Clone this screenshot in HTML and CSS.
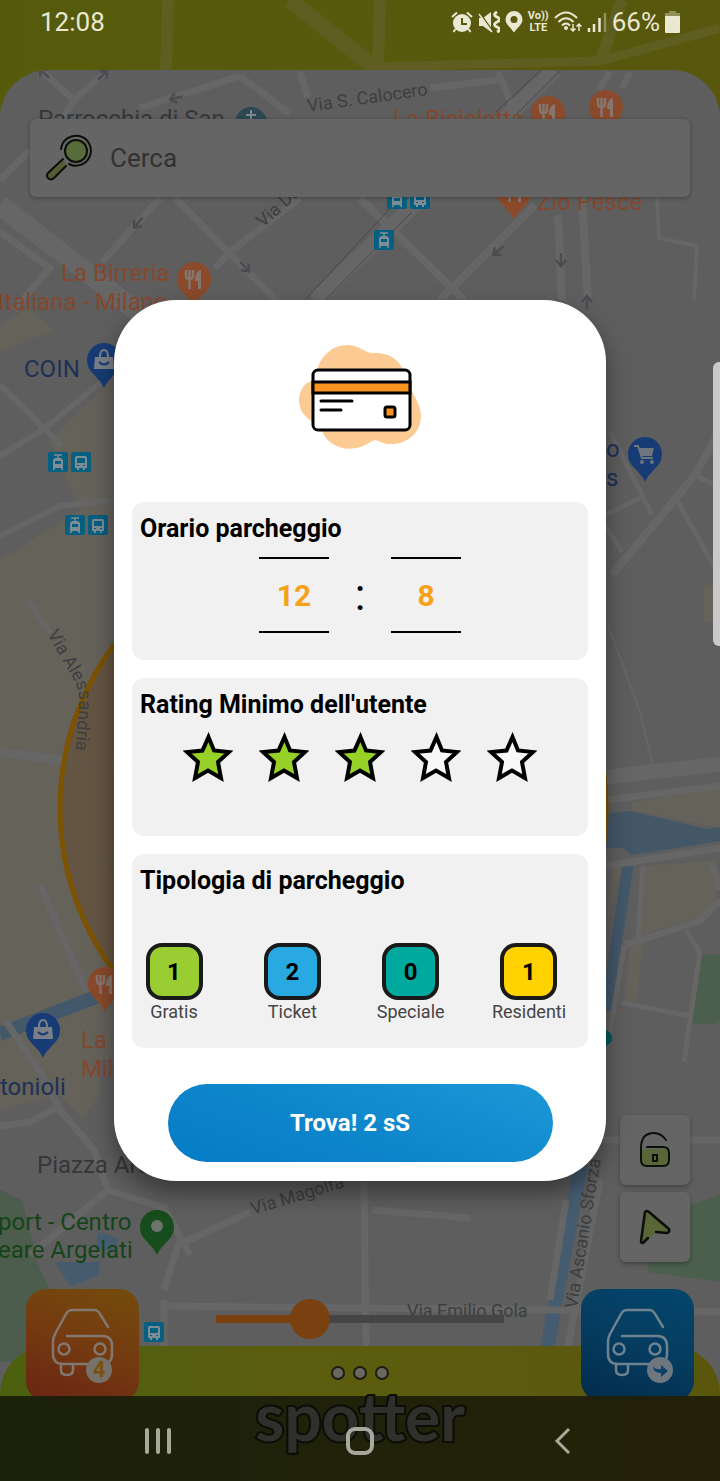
FILE: index.html
```html
<!DOCTYPE html>
<html lang="it">
  <head>
    <meta charset="UTF-8" />
    <meta name="viewport" content="width=device-width, initial-scale=1.0" />
    <title>Spotter</title>
    <link rel="stylesheet" href="styles.css">
  </head>
  <body>
    <div class="app">
      <!-- map -->
      <svg class="map" viewBox="0 0 720 1481" preserveAspectRatio="xMidYMin slice" aria-hidden="true">
        <defs>
          <linearGradient id="top" x1="0" y1="0" x2="1" y2="0">
            <stop offset="0" stop-color="#565b0c" />
            <stop offset="1" stop-color="#58570d" />
          </linearGradient>
          <clipPath id="sheet"><path d="M0 1481V118a48 48 0 0 1 48-48h624a48 48 0 0 1 48 48v1363z" /></clipPath>
          <path id="pin" d="M0 -17a17 17 0 0 1 17 17c0 9-5 12-10 18-4 4-5 6-7 10-2-4-3-6-7-10-5-6-10-9-10-18a17 17 0 0 1 17-17z" />
          <g id="food">
            <path d="M-8 -9v6q0 3 3.500 3t3.500-3v-6M-4.500 -9v19" fill="none" stroke="#85766e" stroke-width="2.500" />
            <path d="M7 10H4V2H1q0-10 6-11z" fill="#85766e" />
          </g>
          <g id="bag">
            <path d="M-9 -3H9L10 9H-10z" fill="#7b7f88" />
            <path d="M-4 -3q0-7 4-7t4 7" fill="none" stroke="#7b7f88" stroke-width="2" />
            <path d="M-5 2q5 5 10 0" fill="none" stroke="#173c75" stroke-width="2" />
          </g>
          <g id="tram">
            <rect width="20" height="20" rx="2" fill="#045f80" />
            <path d="M6 3h8M10 3v3M7 16l-2 2M13 16l2 2" stroke="#7f8d94" stroke-width="1.500" fill="none" />
            <path d="M7 6h6l2 2v8H5V8z" fill="#7f8d94" />
            <path d="M7 9h6v3H7z" fill="#045f80" />
          </g>
          <g id="bus">
            <rect width="20" height="20" rx="2" fill="#045f80" />
            <path d="M5 4h10l1 2v10h-2v2h-2v-2H8v2H6v-2H4V6z" fill="#7f8d94" />
            <path d="M6 6h8v5H6zM6 13h2v1H6zM12 13h2v1h-2z" fill="#045f80" />
          </g>
          <path id="arrow" d="M-7 0H5M0 -5L6 0L0 5" fill="none" stroke="#4b4c52" stroke-width="2.500" />
        </defs>

        <rect width="720" height="1481" fill="url(#top)" />
        <g fill="none" stroke="#5f5e20">
          <path d="M168 0L166 72M380 0L378 66M622 0L600 62" stroke-width="12" />
          <path d="M290 0L380 72" stroke-width="16" />
          <path d="M355 50L370 67L600 61L720 28" stroke-width="9" />
        </g>

        <g clip-path="url(#sheet)">
          <rect y="70" width="720" height="1411" fill="#5e5e5e" />
          <!-- built-up areas, parks, water -->
          <g fill="#65625a">
            <path d="M0 325L28 308L55 330L0 352z" />
            <path d="M50 440L114 378V1060H0V560L80 510z" />
            <path d="M0 1040L100 1000V1095L82 1118L60 1095L0 1110z" />
            <path d="M632 802L720 788V828L632 810z" />
            <path d="M644 866L715 860L716 912L640 935z" />
            <path d="M612 868H622L606 930zM630 945L644 940L636 1002H624z" />
            <path d="M704 585H714V622H704z" />
          </g>
          <path d="M700 955H720V1020L716 1024H692zM690 1205L720 1195V1282L648 1272V1240z" fill="#4b5f4c" />
          <path d="M0 1190L22 1200L40 1270L60 1310L20 1362L0 1362z" fill="#4c5c4d" />
          <path d="M114 850L105 855L114 882z" fill="#56603f" />
          <path d="M98 1232L118 1238L116 1250H96zM55 1262L100 1262L98 1276L70 1286z" fill="#475b6e" />
          <path d="M0 1034L114 990" stroke="#43586a" stroke-width="14" />
          <path d="M606 814L630 811L706 829L720 827V841L632 855L622 848H606z" fill="#435767" />
          <path d="M628 866L606 1010" stroke="#43586a" stroke-width="11" />
          <path d="M581 1165L555 1305L547 1350" fill="none" stroke="#455c70" stroke-width="14" />
          <!-- roads -->
          <g fill="none" stroke="#666" stroke-linejoin="round">
            <path d="M0 205L180 345" stroke-width="20" />
            <path d="M40 70L74 100L108 70M60 124L74 100M0 180L30 150M240 76L290 114M300 72L308 98M430 88L498 80M498 72L512 105M598 90L610 72M622 88L630 72" stroke-width="7" />
            <path d="M240 76L140 108M160 198L102 262M175 198L278 302M300 198L230 252L215 268" stroke-width="7" />
            <path d="M360 198L464 300M535 205L440 300M558 215L562 300M582 198L588 302" stroke-width="8" />
            <path d="M657 198L659 238L697 246L694 300" stroke-width="4" />
            <path d="M555 70L315 300" stroke-width="16" />
            <path d="M0 232L50 268L14 310" stroke-width="7" />
            <path d="M0 385L62 446M0 456L42 430L114 372M0 536L60 506L114 500M28 600L50 634" stroke-width="6" />
            <path d="M0 752L60 760L114 764" stroke-width="9" />
            <path d="M40 885L86 992M5 1020L42 1075L60 1110L94 1150L108 1190" stroke-width="7" />
            <path d="M612 575L695 475L720 430" stroke-width="8" />
            <path d="M610 432L652 515M677 500L714 566M605 515L640 498M605 525L622 552M695 475L720 488" stroke-width="5" />
            <path d="M608 625L640 712L653 766" stroke-width="2" />
            <path d="M606 777L720 764" stroke-width="15" />
            <path d="M606 800L720 786M606 866L720 848M625 945L700 921L720 900M712 862L720 890" stroke-width="7" />
            <path d="M643 866L638 940M624 946L608 1045M622 1003L690 1016M686 930L700 952L684 1062" stroke-width="5" />
            <path d="M0 1126L30 1122L56 1108M30 1255L108 1190L164 1208L190 1255M164 1290L178 1245L250 1212M164 1300V1346" stroke-width="7" />
            <path d="M164 1306L560 1310L720 1312M364 1180L366 1346M372 1210L470 1218M566 1200L550 1300" stroke-width="7" />
            <path d="M604 1140H720M600 1180L568 1346" stroke-width="7" />
          </g>
          <path d="M541 70L496 112M561 70L513 118M398 200L305 300M412 212L325 300" stroke="#484848" />
          <use href="#arrow" transform="translate(44 73) rotate(225)" />
          <use href="#arrow" transform="translate(103 75) rotate(-45)" />
          <use href="#arrow" transform="translate(176 98) rotate(165)" />
          <use href="#arrow" transform="translate(138 223) rotate(130)" />
          <use href="#arrow" transform="translate(245 267) rotate(48)" />
          <use href="#arrow" transform="translate(498 251) rotate(140)" />
          <use href="#arrow" transform="translate(561 260) rotate(90)" />
          <use href="#arrow" transform="translate(587 302) rotate(-90)" />

          <!-- search area -->
          <circle cx="333" cy="808" r="273" fill="#64533d" fill-opacity=".8" stroke="#7d5200" stroke-width="5" />

          <g class="place food">
            <text x="393" y="127">La Bicicletta</text>
            <text x="537" y="210">Zio Pesce</text>
            <text x="61" y="281">La Birreria</text>
            <text x="-2" y="310">Italiana - Milano</text>
            <text x="81" y="1048">La</text>
            <text x="81" y="1077">Mil</text>
          </g>
          <g class="place shop">
            <text x="24" y="377">COIN</text>
            <text x="606" y="457">o</text>
            <text x="606" y="486">s</text>
            <text x="0" y="1095">tonioli</text>
          </g>
          <g class="place park">
            <text x="-2" y="1230">port - Centro</text>
            <text x="-2" y="1258">eare Argelati</text>
          </g>
          <text class="place" x="38" y="127">Parrocchia di San</text>
          <text class="place" x="37" y="1173">Piazza Arcole</text>
          <g class="street">
            <text transform="translate(308 112) rotate(-8)">Via S. Calocero</text>
            <text transform="translate(263 228) rotate(-42)">Via Dante</text>
            <text transform="translate(253 1215) rotate(-17)">Via Magolfa</text>
            <text transform="translate(577 1309) rotate(-81)">Via Ascanio Sforza</text>
            <text x="407" y="1317">Via Emilio Gola</text>
            <path id="aless" d="M47 634L74 680Q80 692 79 704L75 760" fill="none" />
            <text><textPath href="#aless">Via Alessandria</textPath></text>
          </g>

          <circle cx="251" cy="123" r="16" fill="#2d4852" />
          <path d="M251 110v12M246 115h10" stroke="#7b8a90" stroke-width="2" />
          <g transform="translate(548 113)"><use href="#pin" fill="#8a4a2b" /><use href="#food" /></g>
          <g transform="translate(606 107)"><use href="#pin" fill="#8a4a2b" /><use href="#food" /></g>
          <g transform="translate(514 192)"><use href="#pin" fill="#8a4a2b" /><use href="#food" /></g>
          <g transform="translate(194 279)"><use href="#pin" fill="#8a4a2b" /><use href="#food" /></g>
          <g transform="translate(105 984)"><use href="#pin" fill="#8a4a2b" /><use href="#food" /></g>
          <g transform="translate(104 360)"><use href="#pin" fill="#173c75" /><use href="#bag" /></g>
          <g transform="translate(43 1030)"><use href="#pin" fill="#173c75" /><use href="#bag" /></g>
          <g transform="translate(645 454)">
            <use href="#pin" fill="#173c75" />
            <path d="M-11 -8h4l4 12h11" fill="none" stroke="#6f747d" stroke-width="2" />
            <path d="M-6 -6H9L7 2H-4z" fill="#6f747d" />
            <circle cx="-3" cy="8" r="2" fill="#6f747d" /><circle cx="7" cy="8" r="2" fill="#6f747d" />
          </g>
          <g transform="translate(157 1227)"><use href="#pin" fill="#174d1c" /><circle r="6" cy="-1" fill="#6c746c" /></g>
          <circle cx="604" cy="1038" r="8" fill="#005a5c" />
          <use href="#tram" x="387" y="189" /><use href="#bus" x="410" y="189" />
          <use href="#tram" x="374" y="230" />
          <use href="#tram" x="48" y="452" /><use href="#bus" x="71" y="452" />
          <use href="#tram" x="65" y="515" /><use href="#bus" x="88" y="515" />
          <use href="#bus" x="144" y="1322" />
        </g>
      </svg>

      <header class="status">
        <span class="clock">12:08</span>
        <svg width="22" height="22" viewBox="0 0 22 22">
          <circle cx="11" cy="12" r="9" fill="currentColor" />
          <path d="M4.500 18L2.500 21M17.500 18L19.500 21M1 6L6 1.500M21 6L16 1.500" stroke="currentColor" stroke-width="2" />
          <path d="M11 7v6h5" fill="none" stroke="#57580d" stroke-width="2" />
        </svg>
        <svg width="22" height="22" viewBox="0 0 22 22">
          <path d="M1 7h4L13 1v20L5 15H1z" fill="currentColor" />
          <path d="M1 1L15 21" stroke="#57580d" stroke-width="2" />
          <path d="M1 3L14 21" stroke="currentColor" stroke-width="1.500" />
          <path d="M19 1q-5 2.500 0 5t0 5 0 5 0 5" fill="none" stroke="currentColor" stroke-width="3" />
        </svg>
        <svg width="18" height="22" viewBox="0 0 18 22">
          <path d="M9 0a8.500 8.500 0 0 1 8.500 8.500C17.500 13 13 16 9 21.500 5 16 .5 13 .5 8.500A8.500 8.500 0 0 1 9 0zM9 5a3.500 3.500 0 1 0 0 7 3.500 3.500 0 0 0 0-7z" fill="currentColor" />
        </svg>
        <div class="volte"><div>Vo))</div><div>LTE</div></div>
        <svg width="28" height="22" viewBox="0 0 28 22" fill="none" stroke="currentColor" stroke-width="2">
          <path d="M1 7Q12 -4 23 7M4.500 11Q12 3.500 19.500 11M8 14.500Q12 10.500 16 14.500" />
          <circle cx="12" cy="17" r="1" />
          <path d="M19 13v7M16.500 17.500L19 20l2.500-2.500M25 20v-7M22.500 15.500L25 13l2.500 2.500" stroke-width="1.500" />
        </svg>
        <svg width="20" height="22" viewBox="0 0 20 22" stroke="currentColor" stroke-width="2.500">
          <path d="M2 21v-4M7 21v-8M12.500 21V7" />
          <path d="M18 21V2" opacity=".4" />
        </svg>
        <span class="percent">66%</span>
        <svg width="15" height="22" viewBox="0 0 15 22" fill="currentColor">
          <path d="M4 0h7v2h4v4H0V2h4z" opacity=".4" />
          <rect y="5" width="15" height="17" rx="1" />
        </svg>
      </header>

      <label class="search">
        <svg width="48" height="48" viewBox="0 0 48 48" fill="none" stroke="#0c0f08" stroke-width="2" stroke-linecap="round">
          <circle cx="30" cy="17" r="11" fill="#586b3a" />
          <path d="M15 15A15 15 0 1 1 23 30" />
          <path d="M17 25L2 39q-2 3 0 5 3 3 6 0L20 32" fill="#555c33" />
        </svg>
        <input type="text" placeholder="Cerca" aria-label="Cerca">
      </label>

      <div class="side">
        <button class="tool" aria-label="Blocca">
          <svg width="32" height="38" viewBox="0 0 32 38" fill="none" stroke="#0c0f08" stroke-width="2" stroke-linecap="round">
            <path d="M2 18H30V29q0 6-6 6H8q-6 0-6-6z" fill="#586638" stroke="none" />
            <path d="M27 9Q22 2 15 2 2 2 2 17v12q0 6 6 6h16q6 0 6-6v-7q0-6-6-6H8M14 24h4v6h-4z" />
          </svg>
        </button>
        <button class="tool" aria-label="Posizione">
          <svg width="32" height="36" viewBox="0 0 32 36" stroke="#0c0f08" stroke-width="2.500" stroke-linecap="round" stroke-linejoin="round">
            <path d="M3 33L7 3q1-2 3-1L30 20q1 4-3 4H17L6 33z" fill="#586638" stroke="none" />
            <path d="M9 29L4 34Q2 34 2 32L6 3q1-2 4 0L30 20q1 3-2 4L17 23" fill="none" />
          </svg>
        </button>
      </div>

      <div class="bottom">
        <div class="footer"></div>
        <div class="dock">
          <button class="car orange" aria-label="Parcheggi liberi">
            <svg width="62" height="76" viewBox="0 0 62 76" fill="none" stroke="#82786f" stroke-width="2.500" stroke-linecap="round">
              <path d="M56 20L48 7q-2-4-6-4H20q-4 0-6 4L3 27q-2 4-2 8v12q0 10 10 10h39q10 0 10-10v-8q0-10-10-10H15" />
              <circle cx="12" cy="42" r="5.500" /><circle cx="48" cy="42" r="5.500" />
              <path d="M9 58v5q0 5 6 5t6-5v-5" />
              <circle cx="47" cy="63" r="13" fill="#77716b" stroke="none" />
              <text class="count" x="47" y="70">4</text>
            </svg>
          </button>
          <div class="middle">
            <input class="range" type="range" min="0" max="100" value="30" aria-label="Raggio">
            <div class="dots"><i></i><i></i><i></i></div>
          </div>
          <button class="car blue" aria-label="Lascia il posto">
            <svg width="62" height="76" viewBox="0 0 62 76" fill="none" stroke="#6f8290" stroke-width="2.500" stroke-linecap="round">
              <path d="M56 20L48 7q-2-4-6-4H20q-4 0-6 4L3 27q-2 4-2 8v12q0 10 10 10h39q10 0 10-10v-8q0-10-10-10H15" />
              <circle cx="12" cy="42" r="5.500" /><circle cx="48" cy="42" r="5.500" />
              <path d="M9 58v5q0 5 6 5t6-5v-5" />
              <circle cx="53" cy="63" r="13" fill="#6c7780" stroke="none" />
              <path d="M46 59q2 4 8 3v-4l7 6-7 6v-4q-8 0-8-7z" fill="#0a4168" stroke="none" />
            </svg>
          </button>
        </div>
        <nav class="navbar">
          <span class="brand">spotter</span>
          <button aria-label="Recenti">
            <svg width="28" height="28" viewBox="0 0 28 28" stroke="currentColor" stroke-width="4" stroke-linecap="round"><path d="M3 3v22M14 3v22M25 3v22" /></svg>
          </button>
          <button aria-label="Home">
            <svg width="30" height="30" viewBox="0 0 30 30"><rect x="3" y="3" width="24" height="24" rx="7" fill="none" stroke="currentColor" stroke-width="4" /></svg>
          </button>
          <button aria-label="Indietro">
            <svg width="18" height="28" viewBox="0 0 18 28"><path d="M16 2L4 14l12 12" fill="none" stroke="currentColor" stroke-width="3" /></svg>
          </button>
        </nav>
      </div>

      <div class="edge"></div>

      <!-- dialog -->
      <div class="overlay">
        <form class="modal">
          <svg class="card" width="124" height="106" viewBox="0 0 124 106">
            <path d="M18 36C18 14 34 0 51 1c12 1 15 8 25 8 16-1 28 8 31 23 0 9 16 24 16 40 0 18-16 29-31 28-9 0-13-6-18-3-19 14-43 8-50-10C19 77 1 75 1 56c0-11 7-19 17-20z" fill="#fbcb93" />
            <rect x="15" y="26" width="97" height="60" rx="5" fill="#fff" stroke="#000" stroke-width="3" />
            <path d="M15 38h97v11H15z" fill="#f7931e" stroke="#000" stroke-width="3" />
            <path d="M23 57h31M23 66h20" stroke="#000" stroke-width="3" stroke-linecap="round" />
            <rect x="87" y="63" width="10" height="10" rx="2" fill="#f7931e" stroke="#000" stroke-width="3" />
          </svg>

          <section class="panel">
            <h2>Orario parcheggio</h2>
            <div class="time">
              <input type="text" value="12" aria-label="Ore">
              <span>:</span>
              <input type="text" value="8" aria-label="Minuti">
            </div>
          </section>

          <section class="panel">
            <h2>Rating Minimo dell'utente</h2>
            <div class="stars">
              <button type="button" class="on" aria-label="1 stella"><svg viewBox="0 0 50 50"><path d="M25.500 5L31 18.500 46 20 35 30 38 46 25 38.500 12 46 15 30 4 20 19.500 18.500z" /></svg></button>
              <button type="button" class="on" aria-label="2 stelle"><svg viewBox="0 0 50 50"><path d="M25.500 5L31 18.500 46 20 35 30 38 46 25 38.500 12 46 15 30 4 20 19.500 18.500z" /></svg></button>
              <button type="button" class="on" aria-label="3 stelle"><svg viewBox="0 0 50 50"><path d="M25.500 5L31 18.500 46 20 35 30 38 46 25 38.500 12 46 15 30 4 20 19.500 18.500z" /></svg></button>
              <button type="button" aria-label="4 stelle"><svg viewBox="0 0 50 50"><path d="M25.500 5L31 18.500 46 20 35 30 38 46 25 38.500 12 46 15 30 4 20 19.500 18.500z" /></svg></button>
              <button type="button" aria-label="5 stelle"><svg viewBox="0 0 50 50"><path d="M25.500 5L31 18.500 46 20 35 30 38 46 25 38.500 12 46 15 30 4 20 19.500 18.500z" /></svg></button>
            </div>
          </section>

          <section class="panel">
            <h2>Tipologia di parcheggio</h2>
            <div class="types">
              <div><button type="button" class="badge free" aria-labelledby="t1">1</button><span id="t1">Gratis</span></div>
              <div><button type="button" class="badge ticket" aria-labelledby="t2">2</button><span id="t2">Ticket</span></div>
              <div><button type="button" class="badge special" aria-labelledby="t3">0</button><span id="t3">Speciale</span></div>
              <div><button type="button" class="badge resident" aria-labelledby="t4">1</button><span id="t4">Residenti</span></div>
            </div>
          </section>

          <button type="submit" class="find">Trova! 2 sS</button>
        </form>
      </div>
    </div>
  </body>
</html>
```
FILE: styles.css
```css
* {
  margin: 0;
  padding: 0;
  box-sizing: border-box;
}
body {
  font-family: Roboto, "Liberation Sans", sans-serif;
  background-color: #5e5e5e;
}
button,
input {
  font-family: inherit;
  border: none;
  background: none;
  color: inherit;
}
svg {
  display: block;
  flex: none;
}
.app {
  position: relative;
  display: flex;
  flex-direction: column;
  min-height: 100vh;
  overflow: hidden;
}

/* map */
.map {
  position: absolute;
  top: 0;
  left: 0;
  width: 100%;
  height: 100%;
}
.place {
  font-size: 24px;
  fill: #35373b;
}
.place.food {
  fill: #84482e;
}
.place.shop {
  fill: #1d3157;
}
.place.park {
  fill: #164419;
}
.street {
  font-size: 18px;
  fill: #3d3e40;
}

/* status bar */
.status {
  position: relative;
  display: flex;
  align-items: center;
  gap: 5px;
  height: 44px;
  margin-bottom: 75px;
  padding: 0 40px;
  color: #e9e8d2;
}
.clock,
.percent {
  font-size: 26px;
}
.clock {
  margin-right: auto;
}
.volte {
  font-size: 11px;
  line-height: 12px;
  font-weight: 700;
  text-align: center;
}

/* search */
.search {
  position: relative;
  display: flex;
  align-items: center;
  gap: 16px;
  height: 78px;
  margin: 0 30px;
  padding: 0 16px;
  border-radius: 6px;
  background-color: #656565;
  box-shadow: 0 1px 4px rgba(0, 0, 0, 0.3);
}
.search input {
  flex: 1;
  min-width: 0;
  height: 48px;
  font-size: 26px;
  outline: none;
}
.search input::placeholder {
  color: #323232;
}

/* lock and position buttons */
.side {
  position: relative;
  display: flex;
  flex-direction: column;
  gap: 7px;
  align-self: flex-end;
  margin: auto 30px 27px;
}
.tool {
  display: grid;
  place-items: center;
  width: 70px;
  height: 70px;
  border-radius: 6px;
  background-color: #656565;
  box-shadow: 0 2px 4px rgba(0, 0, 0, 0.3);
}

/* bottom: dock over the green footer, system bar over both */
.bottom {
  position: relative;
  display: grid;
  grid-template-columns: 1fr;
  grid-template-rows: 57px 50px 85px;
}
.footer {
  grid-area: 2 / 1 / 4 / 2;
  border-radius: 48px 48px 0 0;
  background: linear-gradient(90deg, #4b600f, #5c5d0f 40%, #5a570d);
}
.dock {
  grid-area: 1 / 1 / 3 / 2;
  display: flex;
  justify-content: space-between;
  align-items: flex-start;
  padding: 0 26px;
}
.car {
  display: grid;
  place-items: center;
  width: 113px;
  height: 112px;
  border-radius: 20px;
}
.car svg {
  overflow: visible;
}
.orange {
  background: linear-gradient(20deg, #6b2413, #743a10 50%, #744c0c);
}
.blue {
  background: linear-gradient(20deg, #022b4b, #053c60 50%, #04466c);
}
.count {
  font-size: 22px;
  font-weight: 700;
  fill: #7a500d;
  stroke: none;
  text-anchor: middle;
}
.middle {
  flex: 0 1 288px;
}
.range {
  -webkit-appearance: none;
  appearance: none;
  display: block;
  width: 100%;
  height: 60px;
}
.range::-webkit-slider-runnable-track {
  height: 8px;
  background: linear-gradient(90deg, #7a400f 33%, #454545 33%);
}
.range::-webkit-slider-thumb {
  -webkit-appearance: none;
  width: 40px;
  height: 40px;
  margin-top: -16px;
  border-radius: 50%;
  background-color: #7a400f;
}
.dots {
  display: flex;
  justify-content: center;
  gap: 8px;
  padding-top: 17px;
}
.dots i {
  width: 14px;
  height: 14px;
  border: 2px solid #1c1c10;
  border-radius: 50%;
  background-color: #686860;
}
.navbar {
  grid-area: 3 / 1 / 4 / 2;
  position: relative;
  display: flex;
  align-items: center;
  padding: 4px 8% 0;
  background: linear-gradient(90deg, rgba(26, 31, 10, 0.96), rgba(33, 31, 8, 0.96));
  color: #a9a99b;
}
.navbar button {
  position: relative;
  display: grid;
  flex: 1;
  place-items: center;
}
.brand {
  position: absolute;
  top: -20px;
  left: 0;
  right: 0;
  font-family: Lato, sans-serif;
  font-size: 66px;
  line-height: 80px;
  font-weight: 700;
  text-align: center;
  color: #2f2f2b;
  -webkit-text-stroke: 4px #0c0d06;
  paint-order: stroke fill;
}
.edge {
  position: absolute;
  top: 362px;
  right: 0;
  width: 7px;
  height: 284px;
  border-radius: 6px 0 0 6px;
  background-color: #c9c9c9;
}

/* dialog */
.overlay {
  position: absolute;
  inset: 0;
  display: flex;
  align-items: center;
  justify-content: center;
}
.modal {
  display: flex;
  flex-direction: column;
  gap: 18px;
  width: 492px;
  max-width: 92%;
  padding: 44px 18px 19px;
  border-radius: 62px;
  background-color: #fff;
  box-shadow: 0 12px 24px rgba(0, 0, 0, 0.4);
}
.card {
  align-self: center;
  margin-bottom: 34px;
}
.panel {
  padding: 12px 8px 24px;
  border-radius: 12px;
  background-color: #f1f1f1;
}
.panel h2 {
  font-size: 25px;
  line-height: 30px;
  font-weight: 700;
  color: #000;
}
.time {
  display: flex;
  justify-content: center;
  align-items: center;
  height: 76px;
  margin: 13px 0 3px;
}
.time input {
  width: 70px;
  height: 76px;
  border-top: 2px solid #000;
  border-bottom: 2px solid #000;
  font-size: 30px;
  font-weight: 700;
  text-align: center;
  color: #f5a21a;
}
.time span {
  width: 62px;
  font-size: 44px;
  line-height: 76px;
  text-align: center;
}
.stars {
  display: flex;
  justify-content: center;
  gap: 26px;
  margin: 12px 0 30px;
}
.stars button {
  width: 50px;
  height: 50px;
}
.stars path {
  fill: #f8f8f8;
  stroke: #000;
  stroke-width: 4px;
}
.stars .on path {
  fill: #97d026;
}
.types {
  display: grid;
  grid-template-columns: repeat(4, 72px);
  justify-content: space-between;
  margin: 47px 15px 0 -2px;
}
.types div {
  display: flex;
  flex-direction: column;
  align-items: center;
}
.types span {
  font-size: 18px;
  line-height: 24px;
  color: #444;
}
.badge {
  width: 57px;
  height: 57px;
  border: 4px solid #1a1a1a;
  border-radius: 16px;
  font-size: 24px;
  font-weight: 700;
  color: #000;
}
.free {
  background-color: #9acd32;
}
.ticket {
  background-color: #29a9e1;
}
.special {
  background-color: #00a99d;
}
.resident {
  background-color: #ffd200;
}
.find {
  align-self: center;
  width: 385px;
  max-width: 90%;
  height: 78px;
  margin-top: 18px;
  padding-right: 20px;
  border-radius: 39px;
  background: linear-gradient(20deg, #057bc5, #0f87cc 50%, #1b98d7);
  font-size: 24px;
  font-weight: 700;
  color: #fff;
}
```
